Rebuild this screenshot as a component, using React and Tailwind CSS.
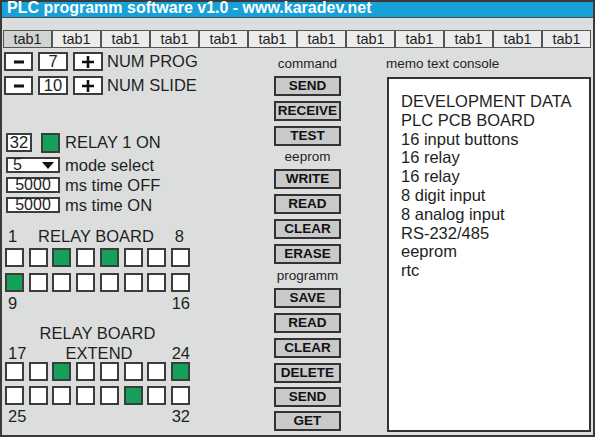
import React from 'react';

const tabs = Array.from({ length: 12 }, (_, i) => i);

// relay states, 1 = on
const board = [
    [0, 0, 1, 0, 1, 0, 0, 0],
    [1, 0, 0, 0, 0, 0, 0, 0],
];
const extend = [
    [0, 0, 1, 0, 0, 0, 0, 1],
    [0, 0, 0, 0, 0, 1, 0, 0],
];

const Minus = () => (
    <svg width="10" height="4" viewBox="0 0 10 4">
        <rect x="0" y="0.5" width="10" height="3" fill="#111" />
    </svg>
);

const Plus = () => (
    <svg width="12" height="12" viewBox="0 0 12 12">
        <path d="M0 6H12M6 0V12" stroke="#111" strokeWidth="2.6" />
    </svg>
);

const Counter = ({ value, label, className }) => (
    <div className={`flex items-center h-[19px] ${className}`}>
        <div className="w-[29px] h-[19px] border-2 border-[#3c3c3c] bg-white flex items-center justify-center">
            <Minus />
        </div>
        <div className="ml-[5px] w-[30px] h-[19px] border-2 border-[#3c3c3c] bg-white flex items-center justify-center text-[16.5px] leading-none text-[#1e1e1e]">
            {value}
        </div>
        <div className="ml-[5px] w-[30px] h-[19px] border-2 border-[#3c3c3c] bg-white flex items-center justify-center">
            <Plus />
        </div>
        <span className="ml-[4px] text-[16.5px] leading-none text-[#1e1e1e]">{label}</span>
    </div>
);

const Field = ({ children, label, className }) => (
    <div className={`flex items-center h-[16px] ${className}`}>
        <div className="ml-[2px] w-[54px] h-[16px] border-2 border-[#3c3c3c] bg-white flex items-center justify-center text-[16px] leading-none text-[#1e1e1e]">
            {children}
        </div>
        <span className="ml-[5px] text-[16.5px] leading-none text-[#1e1e1e]">{label}</span>
    </div>
);

const Grid = ({ rows, className }) => (
    <div className={`ml-[1px] w-[185px] flex flex-col ${className}`}>
        {rows.map((row, r) => (
            <div key={r} className="flex justify-between">
                {row.map((on, c) => (
                    <div
                        key={c}
                        className={`w-[19px] h-[19px] border-2 border-[#3c3c3c] ${on ? 'bg-[#15a05a]' : 'bg-white'}`}
                    />
                ))}
            </div>
        ))}
    </div>
);

const Btn = ({ children, className = '' }) => (
    <div className={`w-[67px] h-[20px] border-2 border-[#333] bg-[#c9c9c9] flex items-center justify-center text-[13.5px] font-bold leading-none text-[#111] ${className}`}>
        {children}
    </div>
);

const Caption = ({ children, className = '' }) => (
    <div className={`w-[67px] text-center text-[13.5px] leading-[14px] text-[#1e1e1e] ${className}`}>{children}</div>
);

const memo = [
    'DEVELOPMENT DATA',
    'PLC PCB BOARD',
    '16 input buttons',
    '16 relay',
    '16 relay',
    '8 digit input',
    '8 analog input',
    'RS-232/485',
    'eeprom',
    'rtc',
];

export default function App() {
    return (
        <div className="w-[600px] h-[438px] bg-white font-['Liberation_Sans',Arial,sans-serif]">
            <div className="w-[595px] h-[437px] border-2 border-[#3a3a3a] bg-[#dcdedd] flex flex-col">
                {/* title bar */}
                <div className="h-[16px] bg-[#17a1d9] border-b border-[#4a4a4a] pl-[5px] text-white font-bold text-[16px] leading-[12px] whitespace-nowrap">
                    PLC programm software v1.0 - www.karadev.net
                </div>

                {/* tabs */}
                <div className="mt-[12px] ml-[1px] flex">
                    {tabs.map((i) => (
                        <div
                            key={i}
                            className={`w-[49px] h-[18px] border border-[#555] flex items-center justify-center text-[14.5px] leading-none text-[#1e1e1e] ${i === 0 ? 'bg-[#d2d3d3]' : 'bg-[#ececec]'}`}
                        >
                            tab1
                        </div>
                    ))}
                </div>

                <div className="flex pl-[2px]">
                    {/* left column */}
                    <div className="w-[270px] flex flex-col">
                        <Counter value="7" label="NUM PROG" className="mt-[4px]" />
                        <Counter value="10" label="NUM SLIDE" className="mt-[5px]" />

                        <div className="mt-[38px] flex items-center h-[19px]">
                            <div className="ml-[2px] w-[26px] h-[19px] border-2 border-[#3c3c3c] bg-white flex items-center justify-center text-[16.5px] leading-none text-[#1e1e1e]">
                                32
                            </div>
                            <div className="ml-[9px] w-[19px] h-[20px] border-2 border-[#3c3c3c] bg-[#15a05a]" />
                            <span className="ml-[5px] text-[16.5px] leading-none text-[#1e1e1e]">RELAY 1 ON</span>
                        </div>

                        <Field label="mode select" className="mt-[5px]">
                            <div className="w-full flex items-center justify-between pl-[5px] pr-[4px]">
                                <span>5</span>
                                <svg width="12" height="7" viewBox="0 0 12 7">
                                    <path d="M0 0H12L6 7Z" fill="#111" />
                                </svg>
                            </div>
                        </Field>
                        <Field label="ms time OFF" className="mt-[4px]">5000</Field>
                        <Field label="ms time ON" className="mt-[4px]">5000</Field>

                        {/* relay board */}
                        <div className="mt-[15px] ml-[1px] w-[185px] flex justify-between pl-[3px] pr-[6px] text-[16.5px] leading-[17px] text-[#1e1e1e]">
                            <span>1</span>
                            <span>RELAY BOARD</span>
                            <span>8</span>
                        </div>
                        <Grid rows={board} className="mt-[3px] gap-[6px]" />
                        <div className="mt-[3px] ml-[1px] w-[185px] flex justify-between pl-[3px] text-[16.5px] leading-[17px] text-[#1e1e1e]">
                            <span>9</span>
                            <span>16</span>
                        </div>

                        <div className="mt-[13px] ml-[1px] w-[185px] text-center text-[16.5px] leading-[17px] text-[#1e1e1e]">
                            RELAY BOARD
                        </div>
                        <div className="mt-[3px] ml-[1px] w-[185px] flex justify-between pl-[3px] text-[16.5px] leading-[17px] text-[#1e1e1e]">
                            <span>17</span>
                            <span>EXTEND</span>
                            <span>24</span>
                        </div>
                        <Grid rows={extend} className="gap-[5px]" />
                        <div className="mt-[3px] ml-[1px] w-[185px] flex justify-between pl-[3px] text-[16.5px] leading-[17px] text-[#1e1e1e]">
                            <span>25</span>
                            <span>32</span>
                        </div>
                    </div>

                    {/* command column */}
                    <div className="w-[67px] flex flex-col">
                        <Caption className="mt-[9px]">command</Caption>
                        <Btn className="mt-[5px]">SEND</Btn>
                        <Btn className="mt-[5px]">RECEIVE</Btn>
                        <Btn className="mt-[5px]">TEST</Btn>
                        <Caption className="mt-[4px]">eeprom</Caption>
                        <Btn className="mt-[5px]">WRITE</Btn>
                        <Btn className="mt-[5px]">READ</Btn>
                        <Btn className="mt-[5px]">CLEAR</Btn>
                        <Btn className="mt-[5px]">ERASE</Btn>
                        <Caption className="mt-[5px]">programm</Caption>
                        <Btn className="mt-[5px]">SAVE</Btn>
                        <Btn className="mt-[5px]">READ</Btn>
                        <Btn className="mt-[5px]">CLEAR</Btn>
                        <Btn className="mt-[5px]">DELETE</Btn>
                        <Btn className="mt-[4px]">SEND</Btn>
                        <Btn className="mt-[4px]">GET</Btn>
                    </div>

                    {/* memo console */}
                    <div className="ml-[45px] flex flex-col">
                        <div className="mt-[9px] text-[13.5px] leading-[14px] text-[#1e1e1e]">memo text console</div>
                        <div className="mt-[6px] ml-[1px] w-[204px] h-[355px] border-2 border-[#333] bg-white pt-[13px] pl-[12px] text-[16.5px] leading-[18.8px] text-[#1e1e1e]">
                            {memo.map((line, i) => (
                                <div key={i}>{line}</div>
                            ))}
                        </div>
                    </div>
                </div>
            </div>
        </div>
    );
}
